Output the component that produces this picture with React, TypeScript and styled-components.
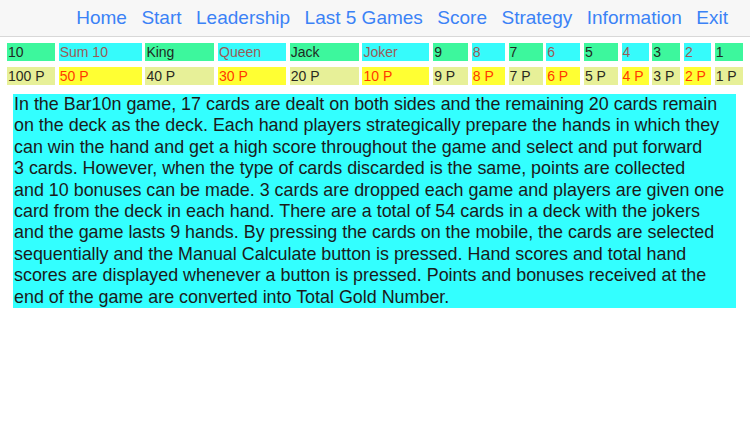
import React from 'react';
import styled, { createGlobalStyle } from 'styled-components';

const GlobalStyle = createGlobalStyle`
  html, body {
    margin: 0;
    padding: 0;
    background: #ffffff;
    font-family: "Liberation Sans", Arial, sans-serif;
  }
`;

const Page = styled.div`
  width: 750px;
  height: 422px;
  background: #ffffff;
  overflow: hidden;
`;

const NavBar = styled.nav`
  height: 36px;
  background: #f7f7f7;
  border-bottom: 1px solid #d8d8d8;
  display: flex;
  align-items: center;
  justify-content: flex-end;
  padding-right: 22px;
  gap: 14.5px;
`;

const NavLink = styled.a`
  color: #3b82f6;
  font-size: 19px;
  text-decoration: none;
  cursor: pointer;
  white-space: nowrap;
`;

const ScoreTable = styled.div`
  display: grid;
  grid-template-columns: 48px 83px 69px 68px 69px 67px 35px 33px 34px 34px 34px 27px 28px 27px 28px;
  column-gap: 3.7px;
  row-gap: 6px;
  margin: 6px 0 0 7px;
`;

const Cell = styled.div<{ $bg: string; $fg: string }>`
  height: 18px;
  line-height: 18px;
  font-size: 14px;
  padding-left: 1px;
  background: ${p => p.$bg};
  color: ${p => p.$fg};
  white-space: nowrap;
  overflow: hidden;
`;

const Description = styled.div`
  margin: 9px 0 0 13px;
  width: 723px;
  height: 214px;
  box-sizing: border-box;
  background: #33ffff;
  color: #1b1b1b;
  font-size: 17.9px;
  line-height: 21.4px;
  padding: 0 0 0 1px;
  white-space: nowrap;
`;

const GREEN = '#3df79d';
const CYAN = '#36fbfb';
const PALE = '#e7f098';
const YELLOW = '#ffff33';

const cards = ['10', 'Sum 10', 'King', 'Queen', 'Jack', 'Joker', '9', '8', '7', '6', '5', '4', '3', '2', '1'];
const points = ['100 P', '50 P', '40 P', '30 P', '20 P', '10 P', '9 P', '8 P', '7 P', '6 P', '5 P', '4 P', '3 P', '2 P', '1 P'];

const navItems = ['Home', 'Start', 'Leadership', 'Last 5 Games', 'Score', 'Strategy', 'Information', 'Exit'];

const lines = [
  'In the Bar10n game, 17 cards are dealt on both sides and the remaining 20 cards remain',
  'on the deck as the deck. Each hand players strategically prepare the hands in which they',
  'can win the hand and get a high score throughout the game and select and put forward',
  '3 cards. However, when the type of cards discarded is the same, points are collected',
  'and 10 bonuses can be made. 3 cards are dropped each game and players are given one',
  'card from the deck in each hand. There are a total of 54 cards in a deck with the jokers',
  'and the game lasts 9 hands. By pressing the cards on the mobile, the cards are selected',
  'sequentially and the Manual Calculate button is pressed. Hand scores and total hand',
  'scores are displayed whenever a button is pressed. Points and bonuses received at the',
  'end of the game are converted into Total Gold Number.',
];

export default function App() {
  return (
    <Page>
      <GlobalStyle />
      <NavBar>
        {navItems.map(item => (
          <NavLink key={item}>{item}</NavLink>
        ))}
      </NavBar>
      <ScoreTable>
        {cards.map((c, i) => (
          <Cell key={'c' + i} $bg={i % 2 === 0 ? GREEN : CYAN} $fg={i % 2 === 0 ? '#1f2a22' : '#9a5b58'}>
            {c}
          </Cell>
        ))}
        {points.map((p, i) => (
          <Cell key={'p' + i} $bg={i % 2 === 0 ? PALE : YELLOW} $fg={i % 2 === 0 ? '#2a2a1e' : '#ff3a00'}>
            {p}
          </Cell>
        ))}
      </ScoreTable>
      <Description>
        {lines.map((l, i) => (
          <React.Fragment key={i}>
            {l}
            <br />
          </React.Fragment>
        ))}
      </Description>
    </Page>
  );
}
